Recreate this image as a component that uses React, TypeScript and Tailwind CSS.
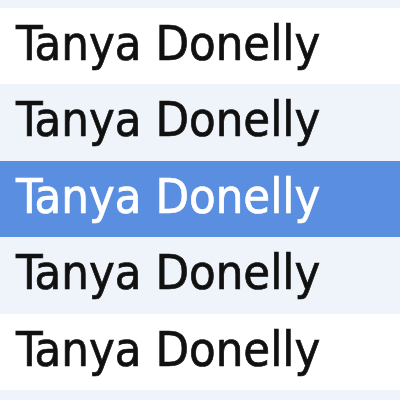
export default function App() {
  const rows = [
    { h: "h-[8px]", bg: "bg-[#eff3fa]", text: false, sel: false },
    { h: "h-[76px]", bg: "bg-white", text: true, sel: false },
    { h: "h-[77px]", bg: "bg-[#eff3fa]", text: true, sel: false },
    { h: "h-[76px]", bg: "bg-[#5a8ee0]", text: true, sel: true },
    { h: "h-[77px]", bg: "bg-[#eff3fa]", text: true, sel: false },
    { h: "h-[76px]", bg: "bg-white", text: true, sel: false },
    { h: "h-[10px]", bg: "bg-[#eff3fa]", text: false, sel: false },
  ];
  return (
    <div className="w-[400px] h-[400px] overflow-hidden flex flex-col" style={{ fontFamily: '"DejaVu Sans Condensed", "Noto Sans", sans-serif' }}>
      {rows.map((r, i) => (
        <div key={i} className={`${r.h} ${r.bg} shrink-0 flex items-center pl-[16px] pb-[6px]`}>
          {r.text && (
            <span className={`text-[48.5px] leading-none [-webkit-text-stroke:0.7px_currentColor] ${r.sel ? "text-white" : "text-[#111]"}`}>Tanya Donelly</span>
          )}
        </div>
      ))}
    </div>
  );
}
